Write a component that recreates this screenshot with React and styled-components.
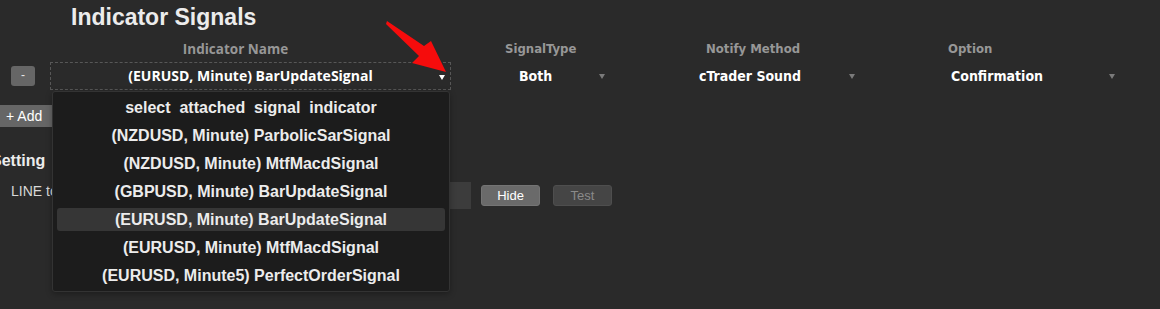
import React from 'react';
import styled, {createGlobalStyle} from 'styled-components';

const GlobalStyle = createGlobalStyle`
  body {
    margin: 0;
    background: #2a2a2a;
    overflow: hidden;
    font-family: "Liberation Sans", Arial, sans-serif;
  }
`;

const options = [
  'select  attached  signal  indicator',
  '(NZDUSD, Minute) ParbolicSarSignal',
  '(NZDUSD, Minute) MtfMacdSignal',
  '(GBPUSD, Minute) BarUpdateSignal',
  '(EURUSD, Minute) BarUpdateSignal',
  '(EURUSD, Minute) MtfMacdSignal',
  '(EURUSD, Minute5) PerfectOrderSignal',
];

const columns = [
  {label: 'SignalType', value: 'Both', labelPad: 54, offset: 54, selectWidth: 110},
  {label: 'Notify Method', value: 'cTrader Sound', labelPad: 21, offset: 0, selectWidth: 180},
  {label: 'Option', value: 'Confirmation', labelPad: 11, offset: 0, selectWidth: 188},
];

const App = () => {
  return (
    <Page>
      <GlobalStyle/>
      <Title>Indicator Signals</Title>
      <SignalGrid>
        <Column>
          <Label/>
          <MinusButton>-</MinusButton>
        </Column>
        <Column>
          <NameLabel>Indicator Name</NameLabel>
          <MainSelect>
            (EURUSD, Minute) BarUpdateSignal
            <Caret $light/>
            <Dropdown>
              {options.map((o, i) => (
                <Option key={o} $active={i === 4}>{o}</Option>
              ))}
            </Dropdown>
          </MainSelect>
        </Column>
        {columns.map(c => (
          <Column key={c.label}>
            <Label $pad={c.labelPad}>{c.label}</Label>
            <SmallSelect $offset={c.offset} style={{width: c.selectWidth}}>
              {c.value}
              <Caret/>
            </SmallSelect>
          </Column>
        ))}
      </SignalGrid>
      <AddButton>+ Add</AddButton>
      <SectionTitle>Setting</SectionTitle>
      <SettingRow>
        <FieldLabel>LINE token</FieldLabel>
        <TextInput/>
        <Button>Hide</Button>
        <Button $disabled>Test</Button>
      </SettingRow>
      <Pointer viewBox="0 0 1160 309">
        <polygon points="387,21 424,46 431,41 446,72 412,63 419,56 386,24" fill="#f60c0c"/>
      </Pointer>
    </Page>
  );
};

const Page = styled.div`
  position: relative;
  width: 1160px;
  height: 309px;
`;

const Title = styled.h1`
  margin: 0;
  padding-left: 71px;
  font-size: 23px;
  line-height: 34px;
  font-weight: bold;
  color: #ececec;
`;

const SignalGrid = styled.div`
  display: grid;
  grid-template-columns: 50px 401px 234px 252px 1fr;
  margin-top: 8px;
`;

const Column = styled.div`
  display: flex;
  flex-direction: column;
  align-items: flex-start;
  gap: 6px;
`;

const Label = styled.div`
  height: 14px;
  line-height: 14px;
  padding-left: ${p => p.$pad || 0}px;
  font-family: "DejaVu Sans Condensed", "DejaVu Sans", sans-serif;
  font-stretch: condensed;
  font-size: 13px;
  font-weight: bold;
  color: #979797;
`;

const NameLabel = styled.div`
  align-self: stretch;
  box-sizing: border-box;
  height: 14px;
  line-height: 14px;
  padding-right: 30px;
  text-align: center;
  font-family: "Open Sans", sans-serif;
  font-size: 13.5px;
  font-weight: bold;
  color: #979797;
`;

const MinusButton = styled.div`
  margin: 4px 0 0 11px;
  width: 24px;
  height: 20px;
  line-height: 19px;
  border-radius: 3px;
  background: #666666;
  color: #e8e8e8;
  font-size: 12px;
  text-align: center;
`;

const MainSelect = styled.div`
  position: relative;
  align-self: stretch;
  box-sizing: border-box;
  height: 28px;
  line-height: 26px;
  border: 1px dashed #575757;
  text-align: center;
  font-family: "Open Sans", sans-serif;
  font-size: 14px;
  font-weight: bold;
  color: #ffffff;
`;

const SmallSelect = styled.div`
  position: relative;
  box-sizing: border-box;
  height: 28px;
  line-height: 28px;
  margin-left: ${p => p.$offset}px;
  padding-left: 14px;
  font-family: "DejaVu Sans Condensed", "DejaVu Sans", sans-serif;
  font-stretch: condensed;
  font-size: 14px;
  font-weight: bold;
  color: #ffffff;
`;

const Caret = styled.span`
  position: absolute;
  right: ${p => (p.$light ? 5 : 10)}px;
  top: 12px;
  width: 0;
  height: 0;
  border-left: 3px solid transparent;
  border-right: 3px solid transparent;
  border-top: 5px solid ${p => (p.$light ? '#ffffff' : '#7a7a7a')};
`;

const Dropdown = styled.div`
  position: absolute;
  top: 28px;
  left: 1px;
  width: 398px;
  box-sizing: border-box;
  z-index: 5;
  display: flex;
  flex-direction: column;
  gap: 5px;
  padding: 4px;
  background: #1c1c1c;
  border: 1px solid #333333;
  border-radius: 3px;
  box-shadow: 0 2px 6px rgba(0, 0, 0, 0.3);
`;

const Option = styled.div`
  height: 23px;
  line-height: 23px;
  border-radius: 3px;
  background: ${p => (p.$active ? '#363636' : 'transparent')};
  font-family: "Liberation Sans", Arial, sans-serif;
  font-size: 16px;
  font-weight: bold;
  color: #ececec;
  text-align: center;
  white-space: pre;
`;

const AddButton = styled.div`
  margin: 15px 0 0 0;
  width: 52px;
  height: 22px;
  line-height: 22px;
  background: #666666;
  color: #ffffff;
  font-size: 14px;
  box-sizing: border-box;
  padding-left: 6px;
`;

const SectionTitle = styled.h2`
  margin: 24px 0 0 -9px;
  font-size: 16px;
  line-height: 20px;
  font-weight: bold;
  color: #ececec;
`;

const SettingRow = styled.div`
  display: flex;
  align-items: flex-start;
  margin-top: 11px;
  padding-left: 11px;
`;

const FieldLabel = styled.div`
  width: 180px;
  line-height: 18px;
  font-size: 14px;
  color: #d8d8d8;
`;

const TextInput = styled.div`
  width: 280px;
  height: 27px;
  background: #3c3c3c;
`;

const Button = styled.div`
  margin: 3px 0 0 ${p => (p.$disabled ? 13 : 10)}px;
  width: 59px;
  height: 21px;
  line-height: 19px;
  box-sizing: border-box;
  border-radius: 3px;
  border: 1px solid ${p => (p.$disabled ? '#4e4e4e' : '#747474')};
  background: ${p => (p.$disabled ? '#454545' : '#6a6a6a')};
  color: ${p => (p.$disabled ? '#8a8a8a' : '#ffffff')};
  font-size: 13px;
  text-align: center;
`;

const Pointer = styled.svg`
  position: absolute;
  left: 0;
  top: 0;
  width: 1160px;
  height: 309px;
  pointer-events: none;
  z-index: 10;
`;

export default App;
